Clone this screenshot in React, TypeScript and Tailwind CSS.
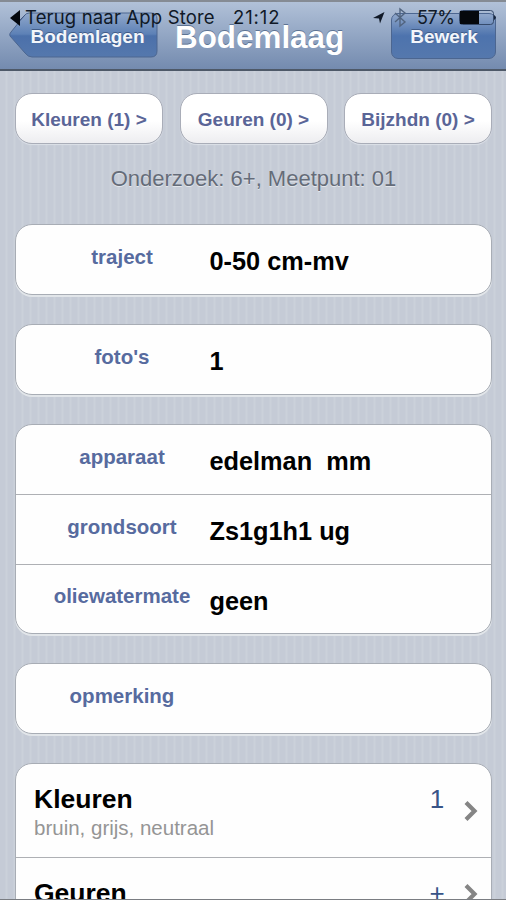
import type { ReactNode } from "react";

function Pill({ children }: { children: ReactNode }) {
  return (
    <button className="h-[51px] w-[148px] shrink-0 whitespace-nowrap rounded-[17px] border border-[#a9adb8] bg-linear-to-b from-white from-55% to-[#ededf0] pt-[4px] text-[19px] font-bold text-[#5a6597] shadow-[0_1px_1px_#dce1e8]">
      {children}
    </button>
  );
}

function Group({ children }: { children: ReactNode }) {
  return (
    <section className="rounded-[17px] border border-[#a8adb5] bg-[#fefefe] shadow-[0_2px_0_#e1e5e9]">
      {children}
    </section>
  );
}

function Field({ label, value, divided }: { label: string; value?: string; divided?: boolean }) {
  return (
    <div className={divided ? "flex h-[69.5px] border-t border-[#aeb0b4]" : "flex h-[69px]"}>
      <div className="ml-[26px] w-[160px] pt-[17.5px] text-center text-[20.5px] leading-[28px] font-bold text-[#576b9f]">
        {label}
      </div>
      <div className="ml-[7.5px] whitespace-pre pt-[20px] text-[25.3px] leading-[32px] font-bold text-black">{value}</div>
    </div>
  );
}

function Chevron() {
  return (
    <svg width="14" height="22" viewBox="0 0 14 22" fill="none" stroke="#858585" strokeWidth="4.2">
      <path d="M2 2.5 10.5 11 2 19.5" />
    </svg>
  );
}

function LinkRow({ title, detail, value, divided }: { title: string; detail?: string; value: string; divided?: boolean }) {
  return (
    <div className={divided ? "flex h-[72px] border-t border-[#aeb0b4]" : "flex h-[93px]"}>
      <div className="flex-1 pt-[19px] pl-[18px]">
        <div className="text-[26.5px] leading-[32px] font-bold text-black">{title}</div>
        {detail && <div className="text-[20.5px] leading-[26px] text-[#959595]">{detail}</div>}
      </div>
      <div className="w-[32px] pt-[19px] text-center text-[26px] leading-[32px] text-[#385487]">{value}</div>
      <div className="mr-[13px] ml-[11px] flex items-center">
        <Chevron />
      </div>
    </div>
  );
}

function StatusBar() {
  return (
    <div className="absolute inset-x-0 top-[4px] flex h-[23px] items-center font-['Inter',sans-serif] text-[18.5px] leading-[23px] whitespace-nowrap text-[#101927]">
      <svg className="ml-[10px] shrink-0" width="15" height="18" viewBox="0 0 15 18">
        <path d="M0 9 10 1v16Z" fill="#03070d" />
        <path d="m10 11 5-5" stroke="#425780" />
      </svg>
      <span className="w-[208px] tracking-[0.16px]">Terug naar App Store</span>
      <span className="w-[139px] tracking-[0.9px]">21:12</span>
      <svg className="shrink-0" width="14" height="15" viewBox="0 0 14 15">
        <path d="M12.500 2 8 13.500 7 8.500 1 8Z" fill="#101927" />
      </svg>
      <svg className="ml-[7px] shrink-0" width="14" height="21" viewBox="0 0 14 21" fill="none" stroke="#51647f" strokeWidth="1.4">
        <path d="m2 6 10 9-5 4V2l5 4-10 9" />
      </svg>
      <span className="ml-[10px] w-[42px] text-[18px] tracking-[-0.4px]">57%</span>
      <svg className="shrink-0" width="39" height="17" viewBox="0 0 39 17">
        <rect x=".5" y="1.5" width="34" height="14" rx="3" fill="none" stroke="#364b6c" />
        <path d="M1 2h19v13H1Z" fill="#05080d" />
        <path d="M35 6q4 2.500 0 5Z" fill="#17263d" />
      </svg>
    </div>
  );
}

export default function App() {
  return (
    <div className="relative h-[900px] w-[506px] overflow-hidden bg-[#c6ccd6] bg-[repeating-linear-gradient(90deg,#c5cbd6_0px,#c5cbd6_5px,#cbd1da_6px,#cbd1da_7px,#c5cbd6_8px)] font-['Liberation_Sans',Arial,sans-serif]">
      <header className="relative h-[71px] border-t-2 border-b-2 border-t-[#858b94] border-b-[#4e5968] bg-linear-to-b from-[#b1c1d8] to-[#748baf]">
        <div className="flex h-[57px] items-stretch">
          <div className="relative ml-[9px] h-[57px] w-[149px] shrink-0">
            <svg className="absolute top-[10px] left-0" width="149" height="47" viewBox="0 0 149 47">
              <defs>
                <linearGradient id="back" x1="0" y1="0" x2="0" y2="1">
                  <stop offset="0" stopColor="#91a8cb" />
                  <stop offset=".48" stopColor="#5d81b6" />
                  <stop offset=".52" stopColor="#4b70aa" />
                  <stop offset="1" stopColor="#5578ad" />
                </linearGradient>
              </defs>
              <path d="M20 1H142q6 0 6 6V39q0 6-6 6H23q-4 0-7-4L1 24Q0 22 2 20L15 4q2-3 5-3Z" fill="url(#back)" stroke="#4c6690" />
            </svg>
            <div className="relative pt-[23px] pl-[21.5px] text-[19px] leading-[24px] font-bold text-[#f3f6fb] [text-shadow:0_-1px_0_#405b87]">
              Bodemlagen
            </div>
          </div>
          <h1 className="w-[233px] pt-[17px] pl-[17px] text-[31.4px] leading-[38px] font-bold text-white [text-shadow:0_-1px_0_#5d7393]">
            Bodemlaag
          </h1>
          <button className="mt-[11px] h-[46px] w-[105px] shrink-0 rounded-[7px] border border-[#4c6690] bg-linear-to-b from-[#91a8cb] via-[#4d73ad] to-[#5578ad] pt-[1px] pl-[1px] text-[19px] leading-[24px] font-bold text-[#f3f6fb] [text-shadow:0_-1px_0_#405b87]">
            Bewerk
          </button>
        </div>
        <StatusBar />
      </header>

      <main className="pt-[22px] pr-[14px] pl-[15px]">
        <div className="flex justify-between">
          <Pill>Kleuren (1) &gt;</Pill>
          <Pill>Geuren (0) &gt;</Pill>
          <Pill>Bijzhdn (0) &gt;</Pill>
        </div>
        <p className="mt-[20px] h-[60px] text-center text-[22px] leading-[30px] text-[#656c79] [text-shadow:0_1px_0_#e3e7ec]">
          Onderzoek: 6+, Meetpunt: 01
        </p>
        <div className="flex flex-col gap-[29px]">
          <Group>
            <Field label="traject" value="0-50 cm-mv" />
          </Group>
          <Group>
            <Field label="foto's" value="1" />
          </Group>
          <Group>
            <Field label="apparaat" value="edelman  mm" />
            <Field label="grondsoort" value="Zs1g1h1 ug" divided />
            <Field label="oliewatermate" value="geen" divided />
          </Group>
          <Group>
            <Field label="opmerking" />
          </Group>
          <Group>
            <LinkRow title="Kleuren" detail="bruin, grijs, neutraal" value="1" />
            <LinkRow title="Geuren" value="+" divided />
          </Group>
        </div>
      </main>
      <div className="absolute inset-x-0 bottom-0 h-px bg-[#7a7d82]" />
    </div>
  );
}
